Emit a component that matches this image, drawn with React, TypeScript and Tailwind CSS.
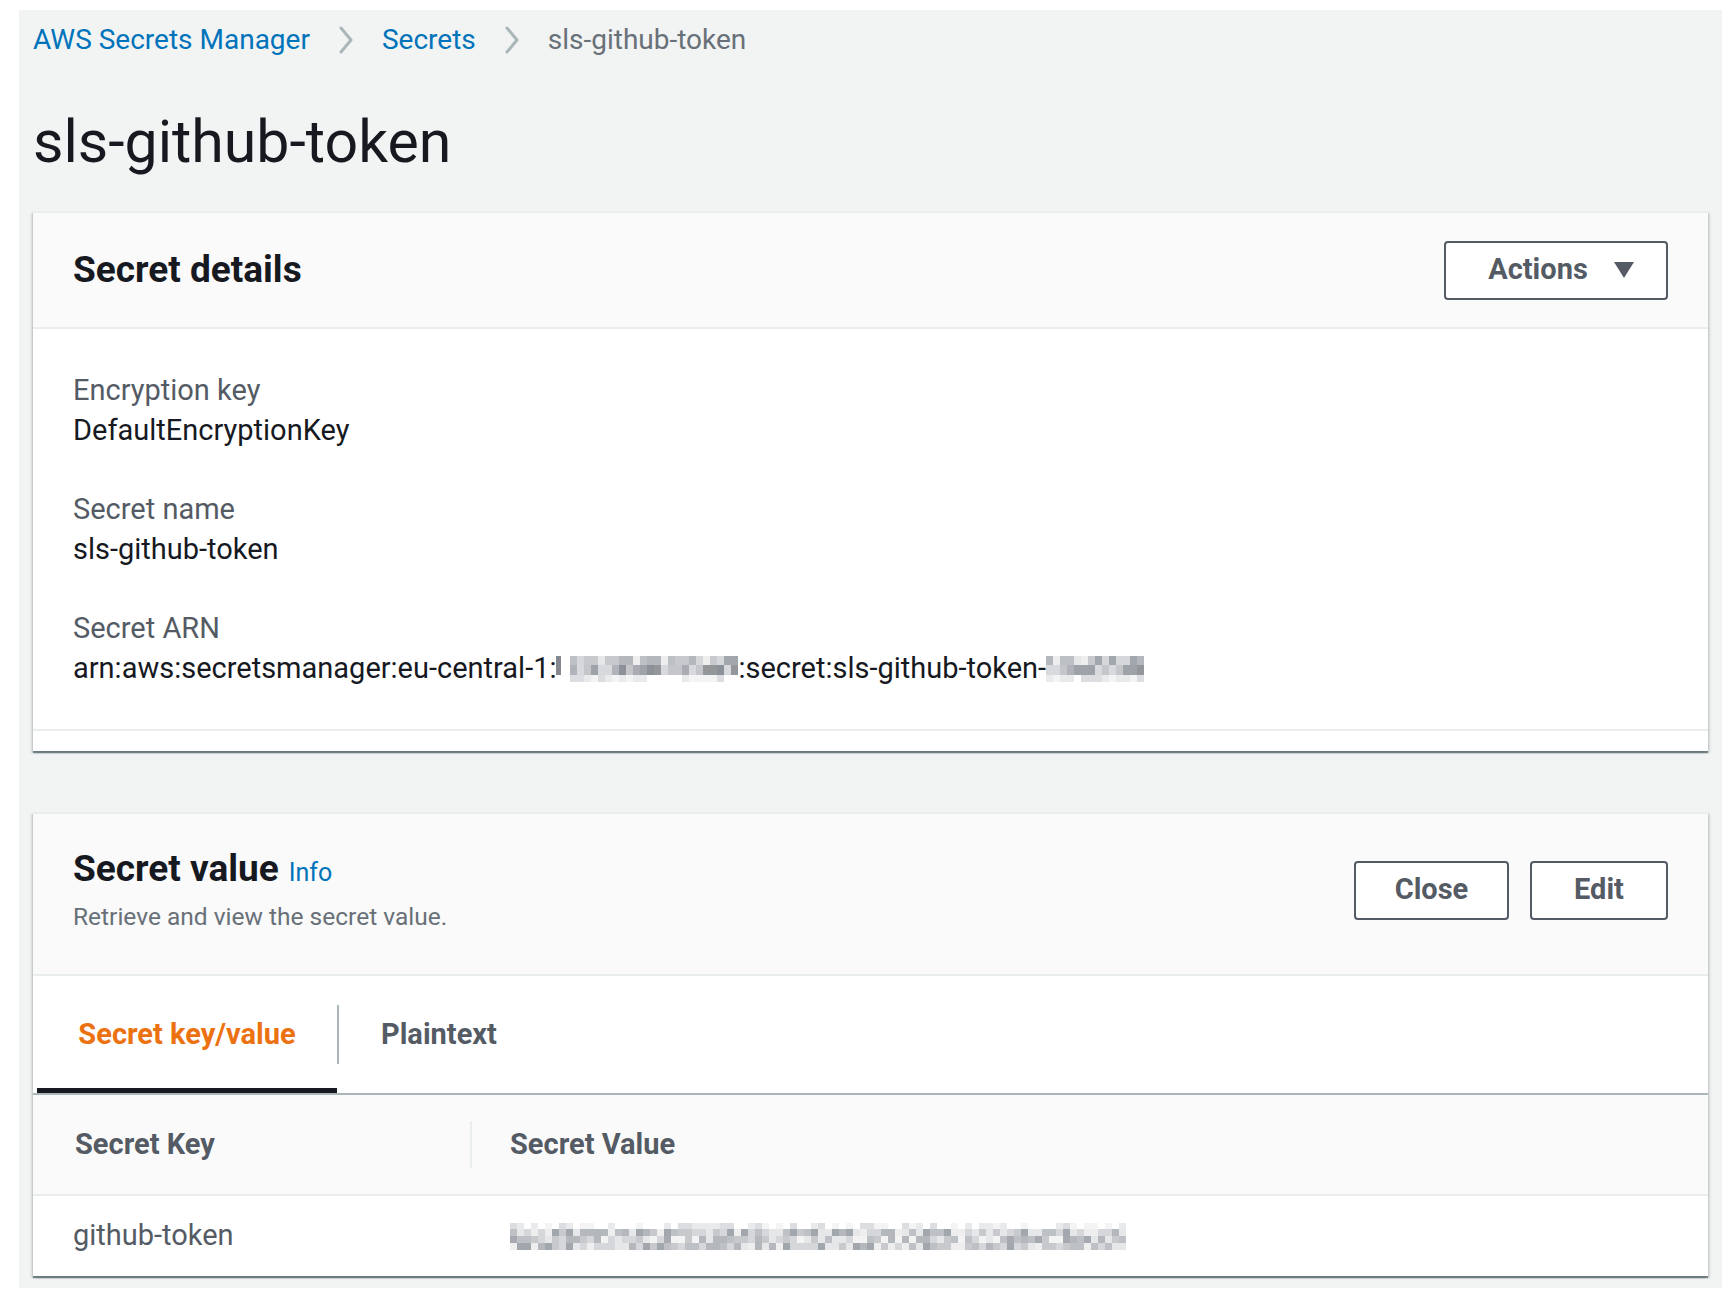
import React from 'react';

const light = ['bg-white', 'bg-white', 'bg-[#f4f4f5]', 'bg-[#e9eaeb]', 'bg-[#dcdde0]'];
const mid = ['bg-[#c7c9cd]', 'bg-[#b4b7bc]', 'bg-[#d6d7da]', 'bg-[#a2a6ad]', 'bg-[#e6e7e9]', 'bg-[#bdc0c4]', 'bg-[#eeeeef]'];
const dark = ['bg-[#9ea2a9]', 'bg-[#b0b3b9]', 'bg-[#c4c6ca]', 'bg-[#8c9098]', 'bg-[#d8d9dc]', 'bg-[#a9acb2]', 'bg-[#939799]'];
const soft = ['bg-[#c7c9cd]', 'bg-[#b4b7bc]', 'bg-[#d6d7da]', 'bg-[#a6aab0]', 'bg-[#e6e7e9]', 'bg-[#bdc0c4]', 'bg-[#f3f3f4]'];

type Row = { h: string; pal: string[] };

// pixelated blur, like the redacted parts of the screenshot
const Mosaic = ({ cols, seed, rows }: { cols: number; seed: number; rows: Row[] }) => {
  let s = seed;
  const next = () => {
    s = (s * 1103515245 + 12345) % 2147483648;
    return Math.floor(s / 65536);
  };
  return (
    <span className="inline-flex flex-col">
      {rows.map((row, r) => (
        <span key={r} className="flex">
          {Array.from({ length: cols }).map((_, c) => (
            <span key={c} className={`w-[7px] ${row.h} ${row.pal[next() % row.pal.length]}`} />
          ))}
        </span>
      ))}
    </span>
  );
};

const arnRows: Row[] = [
  { h: 'h-[9px]', pal: mid },
  { h: 'h-[10px]', pal: dark },
  { h: 'h-[7px]', pal: light },
];

const tokenRows: Row[] = [
  { h: 'h-[6px]', pal: light },
  { h: 'h-[7px]', pal: mid },
  { h: 'h-[7px]', pal: soft },
  { h: 'h-[7px]', pal: mid },
];

const Chevron = () => (
  <svg width="14" height="28" viewBox="0 0 14 28" fill="none">
    <path d="M2 2 L12 14 L2 26" stroke="#aab7b8" strokeWidth="3" strokeLinecap="round" strokeLinejoin="round" />
  </svg>
);

const Button = ({ children, className }: { children: React.ReactNode; className: string }) => (
  <button className={`h-[59px] flex items-center justify-center gap-[26px] bg-white border-2 border-[#545b64] rounded-[4px] text-[29px] font-bold text-[#545b64] ${className}`}>
    {children}
  </button>
);

const Field = ({ label, children }: { label: string; children: React.ReactNode }) => (
  <div>
    <div className="leading-[40px] text-[29px] text-[#545b64]">{label}</div>
    <div className="leading-[40px] text-[29px] text-[#16191f] flex items-center">{children}</div>
  </div>
);

const cardShadow =
  'shadow-[0_2px_1px_0_rgba(0,28,36,0.45),2px_2px_2px_0_rgba(0,28,36,0.12),-2px_2px_2px_0_rgba(0,28,36,0.12)]';

export default function App() {
  return (
    <div className="min-h-screen bg-white pt-[10px] pl-[19px] font-[Roboto,sans-serif]">
      <div className="w-[1703px] h-[1278px] bg-[#f2f3f3] px-[14px] pt-[10px]">
        {/* Breadcrumbs */}
        <nav className="flex items-center gap-[29px] h-[40px] text-[28px]">
          <a className="text-[#0073bb]">AWS Secrets Manager</a>
          <Chevron />
          <a className="text-[#0073bb]">Secrets</a>
          <Chevron />
          <span className="text-[#687078]">sls-github-token</span>
        </nav>

        <h1 className="mt-[47px] text-[59px] leading-[70px] text-[#16191f]">sls-github-token</h1>

        {/* Secret details */}
        <section className={`mt-[34px] bg-white ${cardShadow}`}>
          <div className="h-[118px] bg-[#fafafa] border-t-2 border-b-2 border-[#eaeded] px-[40px] flex items-center justify-between">
            <h2 className="text-[37px] font-bold text-[#16191f]">Secret details</h2>
            <Button className="w-[224px] pl-[10px]">
              Actions
              <svg width="20" height="16" viewBox="0 0 20 16">
                <polygon points="0,0 20,0 10,16" fill="#545b64" />
              </svg>
            </Button>
          </div>
          <div className="px-[40px] pt-[41px] pb-[41px] border-b-2 border-[#eaeded] flex flex-col gap-[39px]">
            <Field label="Encryption key">DefaultEncryptionKey</Field>
            <Field label="Secret name">sls-github-token</Field>
            <Field label="Secret ARN">
              <span>arn:aws:secretsmanager:eu-central-1:</span>
              <span className="flex items-start mt-[2px]">
                <span className="w-[5px] h-[19px] bg-[#85898f]" />
                <span className="w-[9px]" />
                <Mosaic cols={24} seed={19} rows={arnRows} />
              </span>
              <span>:secret:sls-github-token-</span>
              <span className="mt-[2px] flex">
                <Mosaic cols={14} seed={53} rows={arnRows} />
              </span>
            </Field>
          </div>
          <div className="h-[20px]" />
        </section>

        {/* Secret value */}
        <section className={`mt-[61px] bg-white ${cardShadow}`}>
          <div className="bg-[#fafafa] border-t-2 border-b-2 border-[#eaeded] px-[40px] pt-[33px] pb-[41px] flex items-center justify-between">
            <div>
              <div className="flex items-baseline gap-[10px] leading-[44px]">
                <h2 className="text-[37px] font-bold text-[#16191f]">Secret value</h2>
                <a className="text-[25px] text-[#0073bb]">Info</a>
              </div>
              <p className="mt-[6px] text-[24.5px] leading-[32px] text-[#687078]">Retrieve and view the secret value.</p>
            </div>
            <div className="flex gap-[21px]">
              <Button className="w-[155px]">Close</Button>
              <Button className="w-[138px]">Edit</Button>
            </div>
          </div>

          {/* Tabs */}
          <div className="h-[119px] flex border-b-2 border-[#aab7b8]">
            <div className="ml-[4px] w-[300px] pt-[5px] border-b-[5px] border-[#16191f] flex items-center justify-center text-[29px] font-bold text-[#ec7211]">
              Secret key/value
            </div>
            <div className="w-[2px] h-[59px] bg-[#aab7b8] self-center" />
            <div className="pl-[42px] flex items-center text-[29px] font-bold text-[#545b64]">Plaintext</div>
          </div>

          {/* Key / value table */}
          <div className="h-[101px] bg-[#fafafa] border-b-2 border-[#eaeded] flex items-center text-[29px] font-bold text-[#545b64]">
            <div className="w-[437px] pl-[42px]">Secret Key</div>
            <div className="w-[2px] h-[47px] bg-[#eaeded]" />
            <div className="pl-[38px]">Secret Value</div>
          </div>
          <div className="h-[80px] flex items-center text-[29px] text-[#545b64]">
            <div className="w-[437px] pl-[40px]">github-token</div>
            <div className="w-[2px]" />
            <div className="pl-[38px] flex items-center">
              <Mosaic cols={88} seed={113} rows={tokenRows} />
            </div>
          </div>
        </section>
      </div>
    </div>
  );
}
